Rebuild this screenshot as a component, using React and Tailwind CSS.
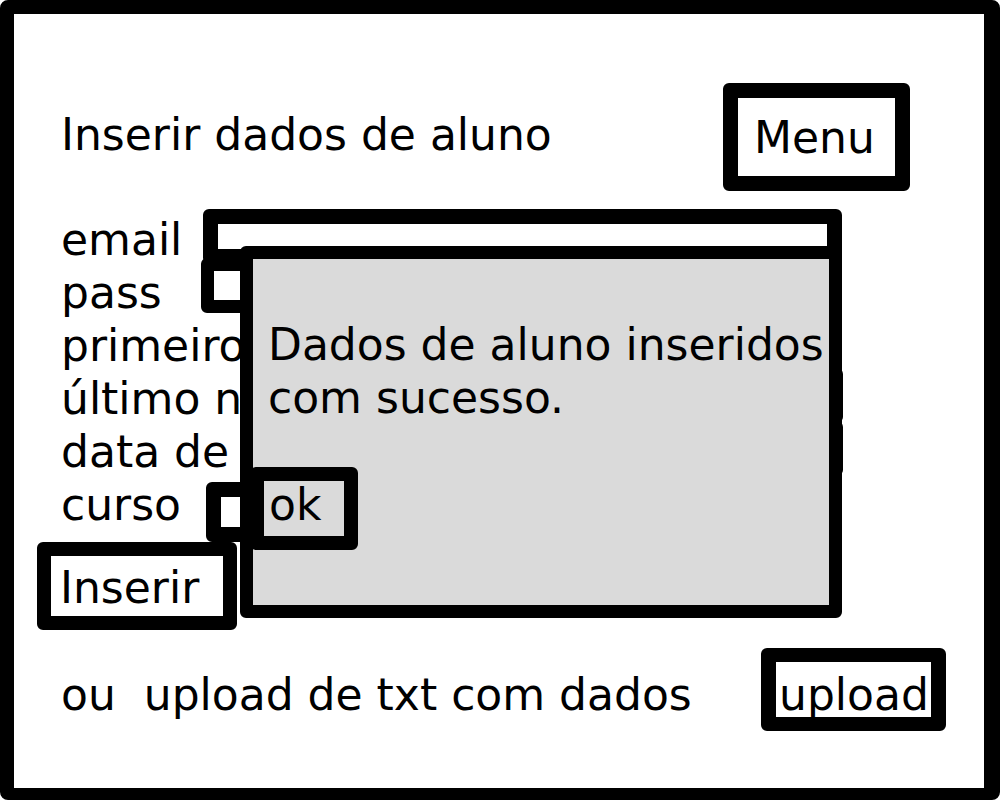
export default function App() {
  const font = { fontFamily: '"DejaVu Sans", Verdana, sans-serif' };
  const Label = ({ children }) => (
    <div className="w-[144px] shrink-0 leading-[53px]">
      <div className="w-[179px] overflow-hidden whitespace-nowrap">{children}</div>
    </div>
  );
  return (
    <div className="w-[1000px] h-[800px] bg-white">
      <div
        className="relative w-[1000px] h-[800px] border-[14px] border-r-[16px] border-b-[12px] border-black rounded-[8px] bg-white text-black text-[44px] pl-[47px] pt-[69px]"
        style={font}
      >
        {/* header */}
        <div className="flex items-start">
          <div className="mt-[26px] leading-[52px] whitespace-nowrap">Inserir dados de aluno</div>
          <div className="ml-auto mr-[74px] w-[187px] h-[108px] border-[15px] border-black rounded-[6px] bg-white pl-[16px] leading-[80px]">
            Menu
          </div>
        </div>

        {/* form rows */}
        <div className="mt-[22px] flex flex-col">
          <div className="flex items-start h-[53px]">
            <Label>email</Label>
            <div className="mt-[-4px] ml-[-2px] w-[639px] h-[55px] border-[15px] border-black rounded-[6px] bg-white" />
          </div>
          <div className="flex items-start h-[53px]">
            <Label>pass</Label>
            <div className="mt-[-8px] ml-[-4px] w-[80px] h-[55px] border-[13px] border-black rounded-[6px] bg-white" />
          </div>
          <div className="flex items-start h-[53px]">
            <Label>primeiro nome</Label>
            <div className="mt-[-4px] ml-[40px] w-[596px] h-[55px] border-[15px] border-black rounded-[6px] bg-white" />
          </div>
          <div className="flex items-start h-[53px]">
            <Label>último nome</Label>
            <div className="mt-[-4px] ml-[40px] w-[598px] h-[55px] border-[15px] border-black rounded-[6px] bg-white" />
          </div>
          <div className="flex items-start h-[53px]">
            <Label>data de nascimento</Label>
            <div className="mt-[-4px] ml-[40px] w-[598px] h-[55px] border-[15px] border-black rounded-[6px] bg-white" />
          </div>
          <div className="flex items-start h-[53px]">
            <Label>curso</Label>
            <div className="mt-[4px] ml-[1px] w-[80px] h-[60px] border-[15px] border-black rounded-[6px] bg-white" />
          </div>
        </div>

        {/* Inserir button */}
        <div className="mt-[11px] ml-[-24px] w-[200px] h-[88px] border-[14px] border-black rounded-[6px] bg-white pl-[9px] leading-[64px]">
          Inserir
        </div>

        {/* upload row */}
        <div className="mt-[18px] flex items-start">
          <div className="mt-[21px] leading-[52px] whitespace-pre">ou  upload de txt com dados</div>
          <div className="ml-auto mr-[38px] w-[185px] h-[83px] border-[15px] border-y-[14px] border-black rounded-[6px] bg-white pl-[3px] leading-[66px]">
            upload
          </div>
        </div>

        {/* dialog overlay */}
        <div className="absolute left-[226px] top-[232px] w-[602px] h-[372px] border-[13px] border-black rounded-[6px] bg-[#dadada] pl-[15px] pt-[59px]">
          <div className="leading-[53px] whitespace-nowrap">
            Dados de aluno inseridos
            <br />
            com sucesso.
          </div>
          <div className="mt-[43px] ml-[-18px] w-[108px] h-[83px] border-[14px] border-black rounded-[6px] bg-[#dadada] pl-[5px] leading-[48px]">
            ok
          </div>
        </div>
      </div>
    </div>
  );
}
